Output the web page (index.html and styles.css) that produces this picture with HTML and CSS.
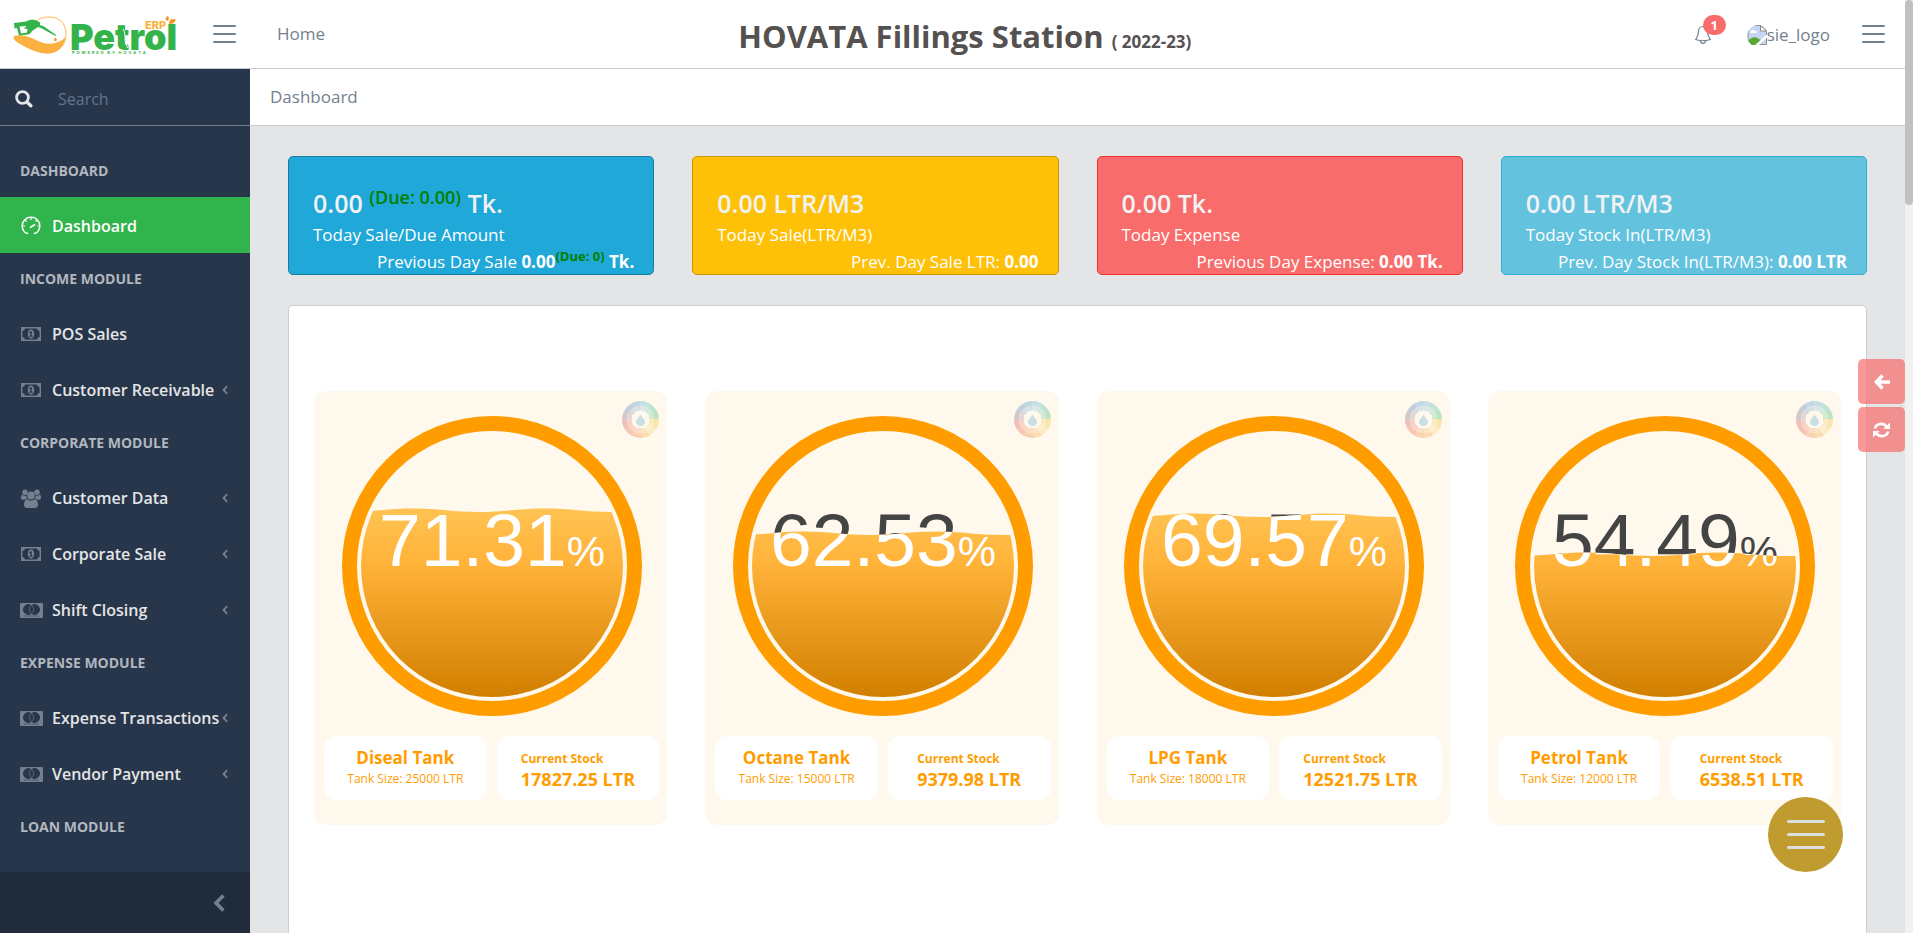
FILE: index.html
```html
<!DOCTYPE html>
<html lang="en">
<head>
<meta charset="utf-8">
<title>Dashboard - Petrol ERP</title>
<link rel="stylesheet" href="styles.css">
</head>
<body>
<svg class="defs" width="0" height="0" aria-hidden="true">
  <defs>
    <linearGradient id="liquid" gradientUnits="userSpaceOnUse" x1="0" y1="19" x2="0" y2="281">
      <stop offset="0" stop-color="#ffd873"/>
      <stop offset="0.5" stop-color="#ffb238"/>
      <stop offset="1" stop-color="#d17f00"/>
    </linearGradient>
    <clipPath id="disc"><circle cx="150" cy="150" r="131"/></clipPath>
    <path id="wave" d="M5 2C29 2 47 -1.500 71 -1.500S112 2 137 2S179 -1.500 203 -1.500S245 2 269 2H300V300H5Z"/>
    <clipPath id="level-1"><use href="#wave" y="94"/></clipPath>
    <clipPath id="level-2"><use href="#wave" y="117"/></clipPath>
    <clipPath id="level-3"><use href="#wave" y="99"/></clipPath>
    <clipPath id="level-4"><use href="#wave" y="138"/></clipPath>
    <symbol id="i-money" viewBox="0 0 20 14">
      <path fill-rule="evenodd" d="M0 0H20V14H0ZM4 1.4A3 3 0 0 1 1.4 4V10A3 3 0 0 1 4 12.6H16A3 3 0 0 1 18.6 10V4A3 3 0 0 1 16 1.4Z"/>
      <path fill-rule="evenodd" d="M10 2.6C12.2 2.6 13.2 4.6 13.2 7S12.2 11.4 10 11.4S6.800 9.400 6.800 7S7.800 2.600 10 2.600ZM9.700 4.300L8 5.600L8.600 6.300L9.300 5.900V8.800H8.300V9.700H11.600V8.800H10.700V4.300Z"/>
    </symbol>
    <symbol id="i-card" viewBox="0 0 23 15">
      <path fill-rule="evenodd" d="M1 0H22A1 1 0 0 1 23 1V14A1 1 0 0 1 22 15H1A1 1 0 0 1 0 14V1A1 1 0 0 1 1 0ZM11.500 2.200A5.300 5.300 0 1 0 11.500 10.800A5.300 5.300 0 1 0 11.500 2.200Z"/>
      <path fill="none" stroke="currentColor" stroke-width="0.600" d="M11.500 2.200A5.300 5.300 0 0 1 11.500 10.800A5.300 5.300 0 0 1 11.500 2.200"/>
      <path stroke="#27364b" stroke-width="1" stroke-dasharray="1 0.500" opacity="0.700" d="M4 13H19"/>
    </symbol>
    <symbol id="i-users" viewBox="0 0 20 19">
      <circle cx="4" cy="3.200" r="2.700"/><circle cx="16" cy="3.200" r="2.700"/>
      <path d="M5 6.600C5.200 8 5.700 8.800 6.400 9.500C5.300 9.600 4.500 10 4 10.700H2C.8 10.700 0 10 0 9C0 7.500.4 5.500 1.500 5.500C2.500 6.800 4 6.900 5 6.600ZM15 6.600C14.800 8 14.300 8.800 13.600 9.500C14.700 9.600 15.500 10 16 10.700H18C19.200 10.700 20 10 20 9C20 7.500 19.600 5.500 18.500 5.500C17.500 6.800 16 6.900 15 6.600Z"/>
      <circle cx="10" cy="6.500" r="3.900"/>
      <path d="M6.500 10.200C8.500 12 11.500 12 13.500 10.200C16 10.200 17 12.800 17 15.800C17 17.800 15.800 19 14.200 19H5.800C4.200 19 3 17.800 3 15.800C3 12.800 4 10.200 6.500 10.200Z"/>
    </symbol>
    <symbol id="i-chevron" viewBox="0 0 12 18">
      <path fill="none" stroke="currentColor" stroke-width="3.600" d="M10.400 1.500L3 9L10.400 16.500"/>
    </symbol>
    <symbol id="i-burger" viewBox="0 0 23 18">
      <path fill="none" stroke="currentColor" stroke-width="2" stroke-linecap="round" d="M1 1H22M1 9H22M1 17H22"/>
    </symbol>
  </defs>
</svg>

<header class="topbar">
  <a class="brand" href="#" aria-label="Petrol ERP">
    <svg width="170" height="40" viewBox="0 0 170 40">
      <path fill="none" stroke="#fbb040" stroke-width="0.900" d="M3 22C.5 25 .3 24 3.500 27C12 33 26 40 36 39C47 38 53 30 53 20C53 9 46 3 36 3C31 3 28 4 25 6"/>
      <path fill="#fbb040" d="M1 22C10 20 17 23 25 27C33 31 45 31 52.500 23C51 32 45 39 36 39.300C26 40 12 33 4 28C1 26 0 24 1 22Z"/>
      <path fill="#34b34a" fill-rule="evenodd" d="M1 9L13 7.500C16 5.500 21 5 24 6.500L27 8.500L27 11L31 12.500L43 21L42.500 22L29 14.500L25 13L19 17L17.500 19.500L15 20.500L6 21.500L4 14L1.500 14.500ZM6.500 12.500L8 19.500L14 18.500L14.500 15L11 14.500L13.500 12Z"/>
      <path fill="#f7941d" d="M42.500 23.500C44.500 25.500 44 27 42.500 27S40.500 25.500 42.500 23.500Z"/>
      <text class="brand-name" x="57" y="36">Petrol</text>
      <text class="brand-tag" x="132" y="15">ERP</text>
      <path fill="#f7941d" d="M156 10C156 5 160 4 163 6C161 9 159 10 156 10ZM153 6C152 4 153 3 155 2C156 4 156 5 155 7Z"/>
      <path fill="none" stroke="#fff" stroke-width="1" d="M110 15C114 21 110 27 115 34"/>
      <text class="brand-line" x="59" y="40">P &#160;O &#160;W &#160;E &#160;R &#160;E &#160;D &#160; &#160;B &#160;Y &#160; &#160;H &#160;O &#160;V &#160;A &#160;T &#160;A</text>
    </svg>
  </a>
  <button class="icon-btn" type="button" aria-label="Toggle sidebar"><svg width="23" height="18"><use href="#i-burger"/></svg></button>
  <a class="home" href="#">Home</a>
  <h1 class="station">HOVATA Fillings Station <small>( 2022-23)</small></h1>
  <a class="bell" href="#" aria-label="Notifications">
    <svg width="16" height="19" viewBox="0 0 16 19" fill="none" stroke="currentColor" stroke-width="1.200">
      <path d="M3.500 6.500C3.500 3.500 5.500 1.500 8 1.500S12.500 3.500 12.500 6.500C12.500 11 14 12.500 15.300 14.500C11 16 5 16 .7 14.500C2 12.500 3.500 11 3.500 6.500Z"/>
      <path d="M5.500 15.500C5.500 17.500 6.500 18.300 8 18.300S10.500 17.500 10.500 15.500"/>
    </svg>
    <span class="badge">1</span>
  </a>
  <a class="avatar" href="#">
    <svg width="20" height="20" viewBox="0 0 20 20" aria-hidden="true">
      <clipPath id="avatar-clip"><ellipse cx="12" cy="11" rx="12" ry="11"/></clipPath>
      <g clip-path="url(#avatar-clip)">
        <path fill="#c5d6f5" stroke="#8b8b8b" d="M1 .5H14L19.500 6V19.500H1Z"/>
        <path fill="#fff" d="M3 8C3 5 7 4 8 6C10 6 10 8 9 8Z"/>
        <path fill="#5aa833" d="M1 20V16C5 11 10 11 14 16L11 20Z"/>
        <path stroke="#fff" stroke-width="2.500" d="M9 21L21 10"/>
        <path fill="#fff" stroke="#8b8b8b" d="M13.500 .5V6H19.500Z"/>
      </g>
    </svg><span>sie_logo</span>
  </a>
  <button class="icon-btn" type="button" aria-label="Toggle panel"><svg width="23" height="18"><use href="#i-burger"/></svg></button>
</header>

<div class="shell">
  <aside class="sidebar">
    <form class="search">
      <label for="q" aria-label="Search">
        <svg width="18" height="18" viewBox="0 0 18 18" fill="none" stroke="currentColor"><circle cx="7.500" cy="7.500" r="5.900" stroke-width="2.800"/><path stroke-width="3.400" stroke-linecap="round" d="M12.500 12.500L15.800 15.800"/></svg>
      </label>
      <input id="q" type="text" placeholder="Search">
    </form>
    <nav class="nav">
      <h2>DASHBOARD</h2>
      <a class="active" href="#"><svg width="20" height="20" viewBox="0 0 20 20" fill="none" stroke="currentColor" stroke-width="1.400"><path d="M5.500 17.500A8.800 8.800 0 1 1 14.500 17.500L12.800 16.800M5.500 17.500L7.200 16.800"/><path stroke-width="1.200" d="M10 1.500V4M4 4L5.600 5.600M1.500 10H4M16 4L14.600 5.600M18.500 10H16.500"/><path stroke-width="1.800" d="M9 11.500L14 8.500"/></svg>Dashboard</a>
      <h2>INCOME MODULE</h2>
      <a href="#"><svg class="ic-sm" width="20" height="14"><use href="#i-money"/></svg>POS Sales</a>
      <a href="#"><svg class="ic-sm" width="20" height="14"><use href="#i-money"/></svg>Customer Receivable<svg class="chev" width="6" height="10"><use href="#i-chevron"/></svg></a>
      <h2>CORPORATE MODULE</h2>
      <a href="#"><svg class="ic-sm" width="20" height="19"><use href="#i-users"/></svg>Customer Data<svg class="chev" width="6" height="10"><use href="#i-chevron"/></svg></a>
      <a href="#"><svg class="ic-sm" width="20" height="14"><use href="#i-money"/></svg>Corporate Sale<svg class="chev" width="6" height="10"><use href="#i-chevron"/></svg></a>
      <a href="#"><svg width="23" height="15"><use href="#i-card"/></svg>Shift Closing<svg class="chev" width="6" height="10"><use href="#i-chevron"/></svg></a>
      <h2>EXPENSE MODULE</h2>
      <a href="#"><svg width="23" height="15"><use href="#i-card"/></svg>Expense Transactions<svg class="chev" width="6" height="10"><use href="#i-chevron"/></svg></a>
      <a href="#"><svg width="23" height="15"><use href="#i-card"/></svg>Vendor Payment<svg class="chev" width="6" height="10"><use href="#i-chevron"/></svg></a>
      <h2>LOAN MODULE</h2>
    </nav>
    <button class="minimizer" type="button" aria-label="Collapse sidebar"><svg width="12" height="18"><use href="#i-chevron"/></svg></button>
  </aside>

  <main class="main">
    <nav class="breadcrumb" aria-label="Breadcrumb">Dashboard</nav>
    <div class="content">
      <section class="stats">
        <article class="stat stat-blue">
          <p class="stat-value">0.00 <sup>(Due: 0.00)</sup> Tk.</p>
          <p class="stat-label">Today Sale/Due Amount</p>
          <p class="stat-prev">Previous Day Sale <b>0.00<sup>(Due: 0)</sup> Tk.</b></p>
        </article>
        <article class="stat stat-yellow">
          <p class="stat-value">0.00 LTR/M3</p>
          <p class="stat-label">Today Sale(LTR/M3)</p>
          <p class="stat-prev">Prev. Day Sale LTR: <b>0.00</b></p>
        </article>
        <article class="stat stat-red">
          <p class="stat-value">0.00 Tk.</p>
          <p class="stat-label">Today Expense</p>
          <p class="stat-prev">Previous Day Expense: <b>0.00 Tk.</b></p>
        </article>
        <article class="stat stat-cyan">
          <p class="stat-value">0.00 LTR/M3</p>
          <p class="stat-label">Today Stock In(LTR/M3)</p>
          <p class="stat-prev">Prev. Day Stock In(LTR/M3): <b>0.00 LTR</b></p>
        </article>
      </section>

      <section class="panel">
        <article class="tank">
          <button class="wheel" type="button" aria-label="Choose colour"><svg width="9" height="12" viewBox="0 0 9 12"><path d="M4.500 0C5 3 9 5 9 8A4.500 4 0 0 1 0 8C0 5 4 3 4.500 0Z"/></svg></button>
          <svg class="gauge" viewBox="0 0 300 300">
            <circle class="ring" cx="150" cy="150" r="142.500"/>
            <text class="pct" x="150" y="150">71.31<tspan>%</tspan></text>
            <g clip-path="url(#disc)"><g clip-path="url(#level-1)"><rect width="300" height="300" fill="url(#liquid)"/><text class="pct wet" x="150" y="150" aria-hidden="true">71.31<tspan>%</tspan></text></g></g>
          </svg>
          <div class="facts">
            <div class="fact"><h3>Diseal Tank</h3><p>Tank Size: 25000 LTR</p></div>
            <div class="fact"><div class="stock"><h4>Current Stock</h4><strong>17827.25 LTR</strong></div></div>
          </div>
        </article>
        <article class="tank">
          <button class="wheel" type="button" aria-label="Choose colour"><svg width="9" height="12" viewBox="0 0 9 12"><path d="M4.500 0C5 3 9 5 9 8A4.500 4 0 0 1 0 8C0 5 4 3 4.500 0Z"/></svg></button>
          <svg class="gauge" viewBox="0 0 300 300">
            <circle class="ring" cx="150" cy="150" r="142.500"/>
            <text class="pct" x="150" y="150">62.53<tspan>%</tspan></text>
            <g clip-path="url(#disc)"><g clip-path="url(#level-2)"><rect width="300" height="300" fill="url(#liquid)"/><text class="pct wet" x="150" y="150" aria-hidden="true">62.53<tspan>%</tspan></text></g></g>
          </svg>
          <div class="facts">
            <div class="fact"><h3>Octane Tank</h3><p>Tank Size: 15000 LTR</p></div>
            <div class="fact"><div class="stock"><h4>Current Stock</h4><strong>9379.98 LTR</strong></div></div>
          </div>
        </article>
        <article class="tank">
          <button class="wheel" type="button" aria-label="Choose colour"><svg width="9" height="12" viewBox="0 0 9 12"><path d="M4.500 0C5 3 9 5 9 8A4.500 4 0 0 1 0 8C0 5 4 3 4.500 0Z"/></svg></button>
          <svg class="gauge" viewBox="0 0 300 300">
            <circle class="ring" cx="150" cy="150" r="142.500"/>
            <text class="pct" x="150" y="150">69.57<tspan>%</tspan></text>
            <g clip-path="url(#disc)"><g clip-path="url(#level-3)"><rect width="300" height="300" fill="url(#liquid)"/><text class="pct wet" x="150" y="150" aria-hidden="true">69.57<tspan>%</tspan></text></g></g>
          </svg>
          <div class="facts">
            <div class="fact"><h3>LPG Tank</h3><p>Tank Size: 18000 LTR</p></div>
            <div class="fact"><div class="stock"><h4>Current Stock</h4><strong>12521.75 LTR</strong></div></div>
          </div>
        </article>
        <article class="tank">
          <button class="wheel" type="button" aria-label="Choose colour"><svg width="9" height="12" viewBox="0 0 9 12"><path d="M4.500 0C5 3 9 5 9 8A4.500 4 0 0 1 0 8C0 5 4 3 4.500 0Z"/></svg></button>
          <svg class="gauge" viewBox="0 0 300 300">
            <circle class="ring" cx="150" cy="150" r="142.500"/>
            <text class="pct" x="150" y="150">54.49<tspan>%</tspan></text>
            <g clip-path="url(#disc)"><g clip-path="url(#level-4)"><rect width="300" height="300" fill="url(#liquid)"/><text class="pct wet" x="150" y="150" aria-hidden="true">54.49<tspan>%</tspan></text></g></g>
          </svg>
          <div class="facts">
            <div class="fact"><h3>Petrol Tank</h3><p>Tank Size: 12000 LTR</p></div>
            <div class="fact"><div class="stock"><h4>Current Stock</h4><strong>6538.51 LTR</strong></div></div>
          </div>
        </article>
      </section>
    </div>
  </main>
</div>

<div class="quick">
  <button type="button" aria-label="Back"><svg width="16" height="16" viewBox="0 0 16 16" fill="none" stroke="currentColor" stroke-width="3.400"><path d="M8.500 1.500L2.400 8L8.500 14.500M3 8H16"/></svg></button>
  <button type="button" aria-label="Reload"><svg width="17" height="16" viewBox="0 0 17 16" fill="none" stroke="currentColor" stroke-width="2.600"><path d="M1.800 6.500A6.500 6 0 0 1 13.500 4.500M15.200 9.500A6.500 6 0 0 1 3.500 11.500"/><path fill="currentColor" stroke="none" d="M17 .5V7H10.300ZM0 15.500V9H6.700Z"/></svg></button>
</div>
<button class="fab" type="button" aria-label="Menu"><span></span><span></span><span></span></button>
<div class="scrollbar" aria-hidden="true"><div class="thumb"></div></div>
</body>
</html>
```

FILE: styles.css
```css
* { box-sizing: border-box; }
html, body { height: 100%; }
body {
  margin: 0;
  display: flex;
  flex-direction: column;
  overflow: hidden;
  padding-right: 8px;
  background: #e4e5e6;
  color: #73818f;
  font: 17px/24px "Open Sans", "Noto Sans", sans-serif;
}
h1, h2, h3, h4, p { margin: 0; }
a { color: inherit; text-decoration: none; }
button { padding: 0; border: 0; background: none; color: inherit; font: inherit; }
.defs { position: absolute; }

.topbar {
  flex: none;
  display: flex;
  align-items: center;
  height: 69px;
  padding-right: 20px;
  background: #fff;
  border-bottom: 1px solid #c8ced3;
}
.brand { margin-left: 13px; height: 40px; }
.brand svg { display: block; overflow: visible; }
.brand-name { font: 900 36px Inter, sans-serif; fill: #34b34a; }
.brand-tag { font: 800 11px Inter, sans-serif; fill: #fbb040; }
.brand-line { font: 700 4px Inter, sans-serif; fill: #34b34a; }
.icon-btn { display: flex; margin-left: 30px; }
.home { margin-left: 41px; }
.station {
  flex: 1;
  padding: 10px 90px 0 0;
  text-align: center;
  font-size: 31px;
  line-height: 40px;
  color: #555150;
}
.station small { font-size: 17px; }
.bell { position: relative; display: flex; }
.badge {
  position: absolute;
  left: 8px;
  top: -10px;
  width: 23px;
  height: 20px;
  border-radius: 10px;
  background: #f86c6b;
  color: #fff;
  font-size: 13px;
  font-weight: 700;
  line-height: 20px;
  text-align: center;
}
.avatar { display: flex; align-items: center; margin: 2px 2px 0 36px; }

.shell { flex: 1; display: flex; min-height: 0; }
.sidebar {
  flex: none;
  display: flex;
  flex-direction: column;
  width: 250px;
  background: #27364b;
}
.search {
  flex: none;
  display: flex;
  align-items: center;
  height: 57px;
  padding: 3px 15px 0;
  border-bottom: 1px solid #73818f;
}
.search label { display: flex; color: #e4e5e6; }
.search input {
  min-width: 0;
  flex: 1;
  margin-left: 25px;
  padding: 0;
  border: 0;
  outline: 0;
  background: none;
  color: #e4e5e6;
  font: inherit;
  font-size: 16px;
}
.search input::placeholder { color: #64748b; opacity: 1; }
.nav { flex: 1; min-height: 0; overflow: hidden; padding-top: 19px; }
.nav h2 { padding: 0 20px; font-size: 14px; line-height: 52px; color: #b1b7bf; }
.nav a {
  display: flex;
  align-items: center;
  height: 56px;
  padding: 2px 22px 0 20px;
  color: #e4e5e6;
  font-weight: 600;
  font-size: 16px;
  white-space: nowrap;
}
.nav a svg { flex: none; color: #73818f; fill: currentColor; margin-right: 9px; }
.nav a svg.ic-sm { margin: 0 11px 0 1px; }
.nav a.active { background: #32b44d; color: #fff; }
.nav a.active svg { color: #fff; fill: none; margin: 0 11px 0 1px; }
.nav a svg.chev { margin: 0 0 0 auto; }
.minimizer {
  flex: none;
  display: flex;
  align-items: center;
  justify-content: flex-end;
  height: 61px;
  padding-right: 25px;
  background: #202b3c;
}

.main { flex: 1; min-width: 0; display: flex; flex-direction: column; }
.breadcrumb {
  flex: none;
  height: 57px;
  padding: 0 20px;
  line-height: 56px;
  background: #fff;
  border-bottom: 1px solid #c8ced3;
}
.content { flex: 1; min-height: 0; display: flex; flex-direction: column; gap: 30px; padding: 30px 38px 0; }
.stats { display: grid; grid-template-columns: repeat(4, 1fr); gap: 38px; }
.stat {
  height: 119px;
  padding: 28px 19px 0 24px;
  border: 1px solid;
  border-radius: 5px;
  color: #fff;
  white-space: nowrap;
}
.stat-blue { background: #20a8d8; border-color: #187da0; }
.stat-yellow { background: #ffc107; border-color: #c69500; }
.stat-red { background: #f86c6b; border-color: #f5302e; }
.stat-cyan { background: #63c2de; border-color: #2eadd3; }
.stat-value { color: #f0f3f5; font-size: 25px; font-weight: 600; line-height: 36px; }
.stat-label { line-height: 27px; }
.stat-prev { text-align: right; line-height: 27px; }
sup { color: #008000; line-height: 0; }
.stat-value sup { font-size: 18px; }
.stat-prev sup { font-size: 13px; }

.panel {
  display: grid;
  grid-template-columns: repeat(4, 1fr);
  align-items: start;
  gap: 38px;
  padding: 85px 25px 120px;
  background: #fff;
  border: 1px solid #c8ced3;
  border-radius: 5px;
}
.tank {
  position: relative;
  display: flex;
  flex-direction: column;
  align-items: center;
  gap: 20px;
  padding: 25px 8px 25px 10px;
  border-radius: 12px;
  background: #fff8ed;
}
.wheel {
  position: absolute;
  top: 10px;
  right: 8px;
  display: flex;
  align-items: center;
  justify-content: center;
  width: 37px;
  height: 37px;
  border-radius: 50%;
  background:
    radial-gradient(circle, #fff8ed 9px, #fff8ed55 9px 14px, transparent 14px),
    conic-gradient(#c6dfe3 30deg, #bfe3d5 30deg 60deg, #bde3c1 60deg 90deg, #f8e6ac 90deg 120deg, #fbecc6 120deg 150deg, #fbdcb0 150deg 180deg, #f8d0b2 180deg 210deg, #f6c5b3 210deg 240deg, #f0c1b8 240deg 270deg, #d6c8ca 270deg 300deg, #c4ced9 300deg 330deg, #c1d7e3 330deg);
}
.wheel svg { fill: #c8dfe6; }
.gauge { display: block; width: 300px; max-width: 100%; }
.ring { fill: none; stroke: #ff9d00; stroke-width: 15px; }
.pct { font: 75px "Liberation Sans", Arial, sans-serif; text-anchor: middle; fill: #444; }
.pct tspan { font-size: 43px; }
.wet { fill: #fff; }
.facts { display: grid; grid-template-columns: 1fr 1fr; gap: 10px; width: 100%; }
.fact {
  height: 64px;
  padding-top: 10px;
  border-radius: 12px;
  background: #fff;
  color: #ff9d00;
  text-align: center;
  white-space: nowrap;
}
.fact h3 { font-size: 17px; line-height: 24px; }
.fact p { font-size: 12px; line-height: 18px; }
.stock { display: inline-block; text-align: left; }
.stock h4 { font-size: 12px; line-height: 26px; }
.stock strong { display: block; font-size: 18px; line-height: 14px; }

.quick { position: fixed; top: 359px; right: 8px; display: grid; gap: 3px; }
.quick button {
  display: flex;
  align-items: center;
  justify-content: center;
  width: 47px;
  height: 45px;
  border-radius: 5px;
  background: rgba(248, 108, 107, 0.7);
  color: #fff;
}
.fab {
  position: fixed;
  right: 70px;
  bottom: 61px;
  display: flex;
  flex-direction: column;
  align-items: center;
  justify-content: center;
  gap: 10px;
  width: 75px;
  height: 75px;
  border-radius: 50%;
  background: #bf9b30;
}
.fab span { width: 38px; height: 3px; border-radius: 2px; background: #ddd; }
.scrollbar { position: fixed; top: 0; right: 0; bottom: 0; width: 8px; background: #f1f1f1; }
.thumb { height: 22%; border-radius: 6px; background: #c1c1c1; }
```
